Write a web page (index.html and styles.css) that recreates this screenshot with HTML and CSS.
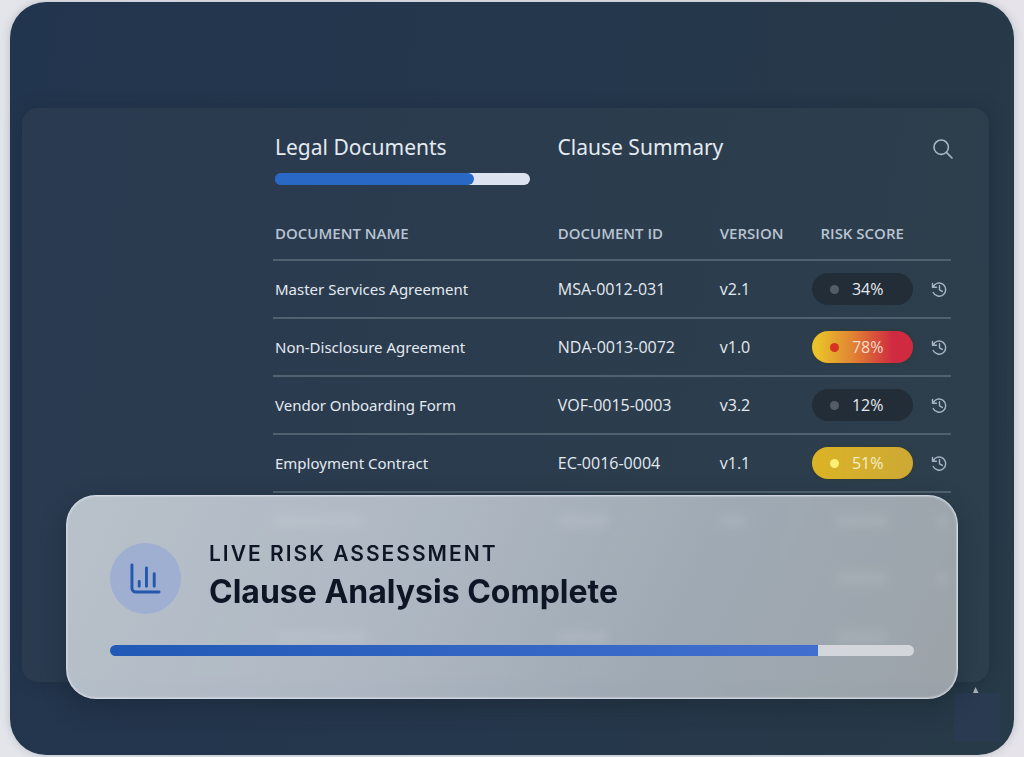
FILE: index.html
```html
<!DOCTYPE html>
<html lang="en">
<head>
  <meta charset="UTF-8" />
  <meta name="viewport" content="width=device-width, initial-scale=1.0"/>
  <title>Legal Documents</title>
  <link rel="stylesheet" href="styles.css">
</head>
<body>
  <!-- History icon, shared by all rows -->
  <svg class="sprite" aria-hidden="true">
    <symbol id="history" viewBox="0 0 18 18">
      <path d="M2.2 6.2A7 7 0 1 1 2.3 12.2M1.6 2.6v4.1h4.2M9 5v4.3l3 1.7"/>
    </symbol>
  </svg>

  <main class="app">
    <section class="panel">
      <div class="panel-head">
        <div class="head-main">
          <h2>Legal Documents</h2>
          <div class="progress"><div class="progress-fill" style="width: 78%"></div></div>
        </div>
        <h2>Clause Summary</h2>
        <button class="search-btn" aria-label="Search">
          <svg viewBox="0 0 20 20"><circle cx="8.2" cy="8.2" r="7.2"/><path d="M13.4 13.4L19 19"/></svg>
        </button>
      </div>

      <table class="docs">
        <thead>
          <tr>
            <th class="col-name">Document Name</th>
            <th class="col-id">Document ID</th>
            <th class="col-version">Version</th>
            <th class="col-risk">Risk Score</th>
            <th class="col-action"></th>
          </tr>
        </thead>
        <tbody>
          <tr>
            <td class="name">Master Services Agreement</td>
            <td>MSA-0012-031</td>
            <td>v2.1</td>
            <td class="risk"><span class="pill low">34%</span></td>
            <td class="action"><button class="history-btn" aria-label="History"><svg><use href="#history"/></svg></button></td>
          </tr>
          <tr>
            <td class="name">Non-Disclosure Agreement</td>
            <td>NDA-0013-0072</td>
            <td>v1.0</td>
            <td class="risk"><span class="pill high">78%</span></td>
            <td class="action"><button class="history-btn" aria-label="History"><svg><use href="#history"/></svg></button></td>
          </tr>
          <tr>
            <td class="name">Vendor Onboarding Form</td>
            <td>VOF-0015-0003</td>
            <td>v3.2</td>
            <td class="risk"><span class="pill low">12%</span></td>
            <td class="action"><button class="history-btn" aria-label="History"><svg><use href="#history"/></svg></button></td>
          </tr>
          <tr>
            <td class="name">Employment Contract</td>
            <td>EC-0016-0004</td>
            <td>v1.1</td>
            <td class="risk"><span class="pill medium">51%</span></td>
            <td class="action"><button class="history-btn" aria-label="History"><svg><use href="#history"/></svg></button></td>
          </tr>
        </tbody>
        <!-- Rows under the glass card -->
        <tbody class="covered" aria-hidden="true">
          <tr>
            <td><span class="smudge wide"></span></td>
            <td><span class="smudge"></span></td>
            <td><span class="smudge short"></span></td>
            <td class="risk"><span class="smudge"></span></td>
            <td class="action"><span class="smudge dot"></span></td>
          </tr>
          <tr>
            <td></td>
            <td></td>
            <td></td>
            <td class="risk"><span class="smudge"></span></td>
            <td class="action"><span class="smudge dot"></span></td>
          </tr>
          <tr>
            <td><span class="smudge wide"></span></td>
            <td><span class="smudge"></span></td>
            <td></td>
            <td class="risk"><span class="smudge"></span></td>
            <td></td>
          </tr>
        </tbody>
      </table>
    </section>

    <!-- Corner mark -->
    <svg class="corner-mark" viewBox="0 0 46 56" aria-hidden="true">
      <rect x="0" y="7" width="46" height="49" fill="#2b3c58" fill-opacity="0.6"/>
      <path d="M21.500 1L24.500 7H19z" fill="#a9b2b9"/>
    </svg>

    <section class="status-card">
      <div class="status-head">
        <div class="status-icon">
          <svg viewBox="0 0 32 32"><path d="M2 2v24a4 4 0 0 0 4 4h24M9.500 19v5M17 5v19M25 11v13"/></svg>
        </div>
        <div>
          <p class="status-label">LIVE RISK ASSESSMENT</p>
          <h1>Clause Analysis Complete</h1>
        </div>
      </div>
      <div class="status-bar"><div class="status-fill" style="width: 88%"></div></div>
    </section>
  </main>
</body>
</html>
```

FILE: styles.css
```css
* {
  box-sizing: border-box;
}

body {
  margin: 0;
  padding: 2px 10px;
  min-height: 100vh;
  display: flex;
  background: linear-gradient(90deg, #e3e5ea, #e6e4ea);
  font-family: "Open Sans", "Noto Sans", sans-serif;
  color: #e4eaf0;
}

h1, h2, p {
  margin: 0;
}

button {
  padding: 0;
  border: none;
  background: none;
  cursor: pointer;
}

svg {
  display: block;
  fill: none;
  stroke-linecap: round;
  stroke-linejoin: round;
}

.sprite {
  position: absolute;
  width: 0;
  height: 0;
}

.app {
  position: relative;
  flex: 1;
  display: flex;
  padding: 106px 25px 73px 12px;
  border-radius: 36px;
  background: linear-gradient(100deg, #22354e 0%, #25374c 50%, #273a47 100%);
  box-shadow: 0 0 8px rgba(120, 130, 150, 0.4);
}

.panel {
  flex: 1;
  padding: 25px 38px 0 251px;
  border-radius: 16px;
  background: linear-gradient(100deg, #2a3a50 0%, #2b3c4e 50%, #2d3f4c 100%);
  box-shadow: 0 0 16px rgba(20, 34, 48, 0.35);
}

/* Panel header */
.panel-head {
  display: flex;
  align-items: flex-start;
  padding-left: 2px;
}

.head-main {
  width: 41.8%;
  padding-right: 28px;
}

h2 {
  font-family: "Noto Sans", sans-serif;
  font-size: 21px;
  line-height: 28px;
  font-weight: 400;
  white-space: nowrap;
}

.progress {
  height: 12px;
  margin-top: 12px;
  border-radius: 6px;
  background: linear-gradient(90deg, #2a68c6 50%, #dde2f0 50%);
}

.progress-fill {
  height: 100%;
  border-radius: 6px;
  background: #2a68c6;
}

.search-btn {
  margin: 6px 0 0 auto;
}

.search-btn svg {
  width: 20px;
  height: 20px;
  margin-right: -2px;
  stroke: #a9b6c2;
  stroke-width: 1.6;
}

/* Documents table */
.docs {
  width: 100%;
  margin-top: 23px;
  border-collapse: collapse;
  table-layout: fixed;
}

.docs th {
  height: 52px;
  padding: 0 0 2px 2px;
  border-bottom: 2px solid #52616f;
  font-size: 15px;
  font-weight: 600;
  text-align: left;
  text-transform: uppercase;
  white-space: nowrap;
  color: #b9c4d2;
}

.docs td {
  height: 58px;
  padding: 0 0 0 2px;
  border-bottom: 2px solid #52616f;
  font-size: 16px;
  white-space: nowrap;
}

.docs .name {
  font-family: "Noto Sans", sans-serif;
  font-size: 15px;
}

.col-name { width: 41.7%; }
.col-id { width: 23.9%; }
.col-version { width: 13.2%; }
.col-risk { width: 16.2%; }
.col-action { width: 5%; }

.docs .col-risk,
.docs .risk {
  padding-left: 0;
  text-align: center;
}

.docs .action {
  padding: 0 3px 0 0;
  text-align: right;
}

.pill {
  position: relative;
  display: block;
  width: 101px;
  margin: 0 auto;
  padding-left: 11px;
  border-radius: 16px;
  line-height: 32px;
}

.pill::before {
  content: "";
  position: absolute;
  left: 18px;
  top: 12px;
  width: 9px;
  height: 9px;
  border-radius: 50%;
  background: #545c66;
}

.low {
  background: #232d38;
}

.high {
  background: linear-gradient(90deg, #eac22a 5%, #e08433 40%, #d02a40 80%);
  box-shadow: 0 0 3px #3a3a20;
  color: #f6dccb;
}

.high::before {
  background: #d63320;
}

.medium {
  background: linear-gradient(90deg, #dcb326, #cca935);
  box-shadow: 0 0 3px #3a3a20;
  color: #f6edc8;
}

.medium::before {
  background: #fbf077;
}

.history-btn {
  display: block;
  margin-left: auto;
}

.history-btn svg {
  width: 17px;
  height: 17px;
  stroke: #a9b6c2;
  stroke-width: 1.5;
}

.covered td {
  border-color: transparent;
}

.smudge {
  display: inline-block;
  width: 50px;
  height: 12px;
  border-radius: 4px;
  background: #4c5b69;
}

.smudge.wide { width: 90px; }
.smudge.short { width: 26px; }
.smudge.dot { width: 12px; }

.corner-mark {
  position: absolute;
  right: 14px;
  bottom: 13px;
  width: 46px;
  height: 56px;
}

/* Glass card over the table */
.status-card {
  position: absolute;
  left: 56px;
  right: 56px;
  bottom: 56px;
  padding: 44px 43px 42px;
  border: 1px solid rgba(222, 228, 238, 0.7);
  border-radius: 30px;
  background: linear-gradient(115deg, rgba(212, 220, 226, 0.84) 0%, rgba(208, 215, 224, 0.8) 38%, rgba(196, 204, 212, 0.76) 68%, rgba(190, 195, 198, 0.77) 100%);
  backdrop-filter: blur(4px);
  box-shadow: 0 8px 24px rgba(20, 30, 40, 0.4), inset 0 0 1px 1px rgba(222, 228, 238, 0.4);
}

.status-head {
  display: flex;
  align-items: center;
  gap: 28px;
  font-family: Inter, sans-serif;
  color: #0e1626;
}

.status-icon {
  width: 71px;
  height: 71px;
  display: flex;
  align-items: center;
  justify-content: center;
  border-radius: 50%;
  background: #9fafd2;
}

.status-icon svg {
  width: 31px;
  height: 31px;
  stroke: #2457ae;
  stroke-width: 3;
}

.status-label {
  font-size: 21px;
  line-height: 28px;
  font-weight: 600;
  letter-spacing: 2px;
}

h1 {
  font-size: 32px;
  line-height: 48px;
  font-weight: 700;
}

.status-bar {
  height: 11px;
  margin-top: 29px;
  border-radius: 6px;
  background: #d3d6da;
  overflow: hidden;
}

.status-fill {
  height: 100%;
  background: linear-gradient(90deg, #2159b6, #416fd0);
}
```
